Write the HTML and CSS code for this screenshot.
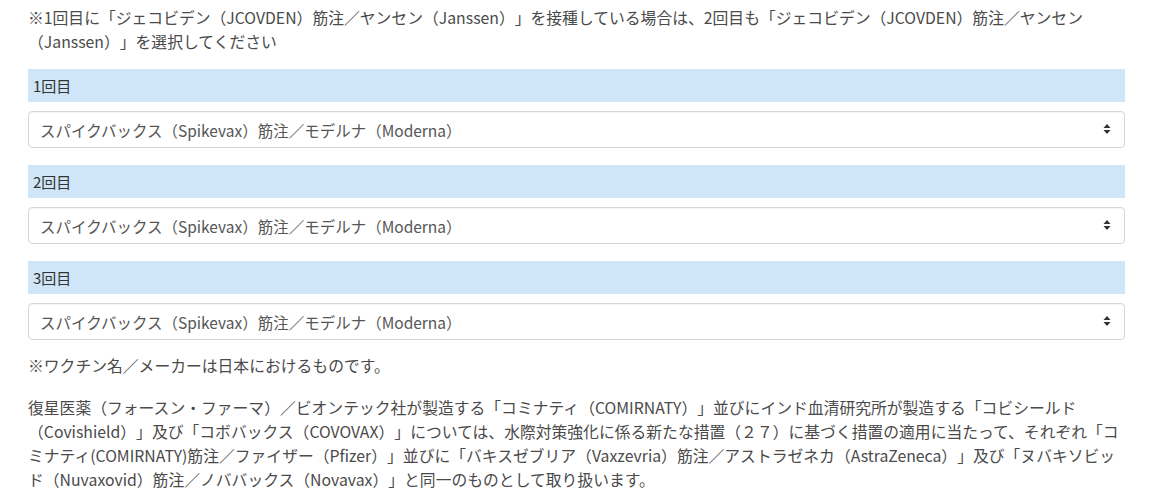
FILE: index.html
```html
<!DOCTYPE html>
<html lang="ja">
<head>
<meta charset="utf-8">
<link rel="stylesheet" href="styles.css">
</head>
<body>
<div class="page">
  <p class="lead">※1回目に「ジェコビデン（JCOVDEN）筋注／ヤンセン（Janssen）」を接種している場合は、2回目も「ジェコビデン（JCOVDEN）筋注／ヤンセン（Janssen）」を選択してください</p>

  <div class="dose">
    <div class="dose-label">1回目</div>
    <div class="select-wrap">
      <select class="form-select"><option>スパイクバックス（Spikevax）筋注／モデルナ（Moderna）</option></select>
      <svg class="caret" width="8" height="12" viewBox="0 0 8 12"><path d="M4 1 L7.5 5 H0.5 Z M4 11 L7.5 7 H0.5 Z" fill="#333"/></svg>
    </div>
  </div>

  <div class="dose">
    <div class="dose-label">2回目</div>
    <div class="select-wrap">
      <select class="form-select"><option>スパイクバックス（Spikevax）筋注／モデルナ（Moderna）</option></select>
      <svg class="caret" width="8" height="12" viewBox="0 0 8 12"><path d="M4 1 L7.5 5 H0.5 Z M4 11 L7.5 7 H0.5 Z" fill="#333"/></svg>
    </div>
  </div>

  <div class="dose">
    <div class="dose-label">3回目</div>
    <div class="select-wrap">
      <select class="form-select"><option>スパイクバックス（Spikevax）筋注／モデルナ（Moderna）</option></select>
      <svg class="caret" width="8" height="12" viewBox="0 0 8 12"><path d="M4 1 L7.5 5 H0.5 Z M4 11 L7.5 7 H0.5 Z" fill="#333"/></svg>
    </div>
  </div>

  <p class="note">※ワクチン名／メーカーは日本におけるものです。</p>
  <p class="body-text">復星医薬（フォースン・ファーマ）／ビオンテック社が製造する「コミナティ（COMIRNATY）」並びにインド血清研究所が製造する「コビシールド（Covishield）」及び「コボバックス（COVOVAX）」については、水際対策強化に係る新たな措置（２７）に基づく措置の適用に当たって、それぞれ「コミナティ(COMIRNATY)筋注／ファイザー（Pfizer）」並びに「バキスゼブリア（Vaxzevria）筋注／アストラゼネカ（AstraZeneca）」及び「ヌバキソビッド（Nuvaxovid）筋注／ノババックス（Novavax）」と同一のものとして取り扱います。</p>
</div>
</body>
</html>
```

FILE: styles.css
```css
html, body {
  margin: 0;
  padding: 0;
  background: #fff;
}
body {
  font-family: "Noto Sans CJK JP", "Noto Sans", sans-serif;
  font-size: 15.8px;
  line-height: 24px;
  color: #4a4a4a;
  text-spacing-trim: space-all;
}
.page {
  padding: 6px 39px 0 28px;
}
p {
  margin: 0;
}
.lead {
  margin-bottom: 15px;
}
.dose {
  margin-bottom: 17px;
}
.dose-label {
  background: #cfe6f9;
  height: 33px;
  line-height: 33px;
  padding: 0 5px;
  margin-bottom: 9px;
  color: #333;
  font-size: 15px;
}
.select-wrap {
  position: relative;
}
.form-select {
  display: block;
  width: 100%;
  height: 37px;
  box-sizing: border-box;
  padding: 0 30px 0 11px;
  border: 1px solid #d6d6d6;
  border-radius: 4px;
  background: #fff;
  font-family: inherit;
  font-size: 15.5px;
  color: #555;
  text-spacing-trim: space-all;
  -webkit-appearance: none;
  appearance: none;
  box-shadow: inset 0 1px 1px rgba(0,0,0,0.04);
}
.caret {
  position: absolute;
  right: 14px;
  top: 12px;
}
.note {
  margin-top: -3px;
  margin-bottom: 18px;
}
.body-text {
  color: #4a4a4a;
}
```
